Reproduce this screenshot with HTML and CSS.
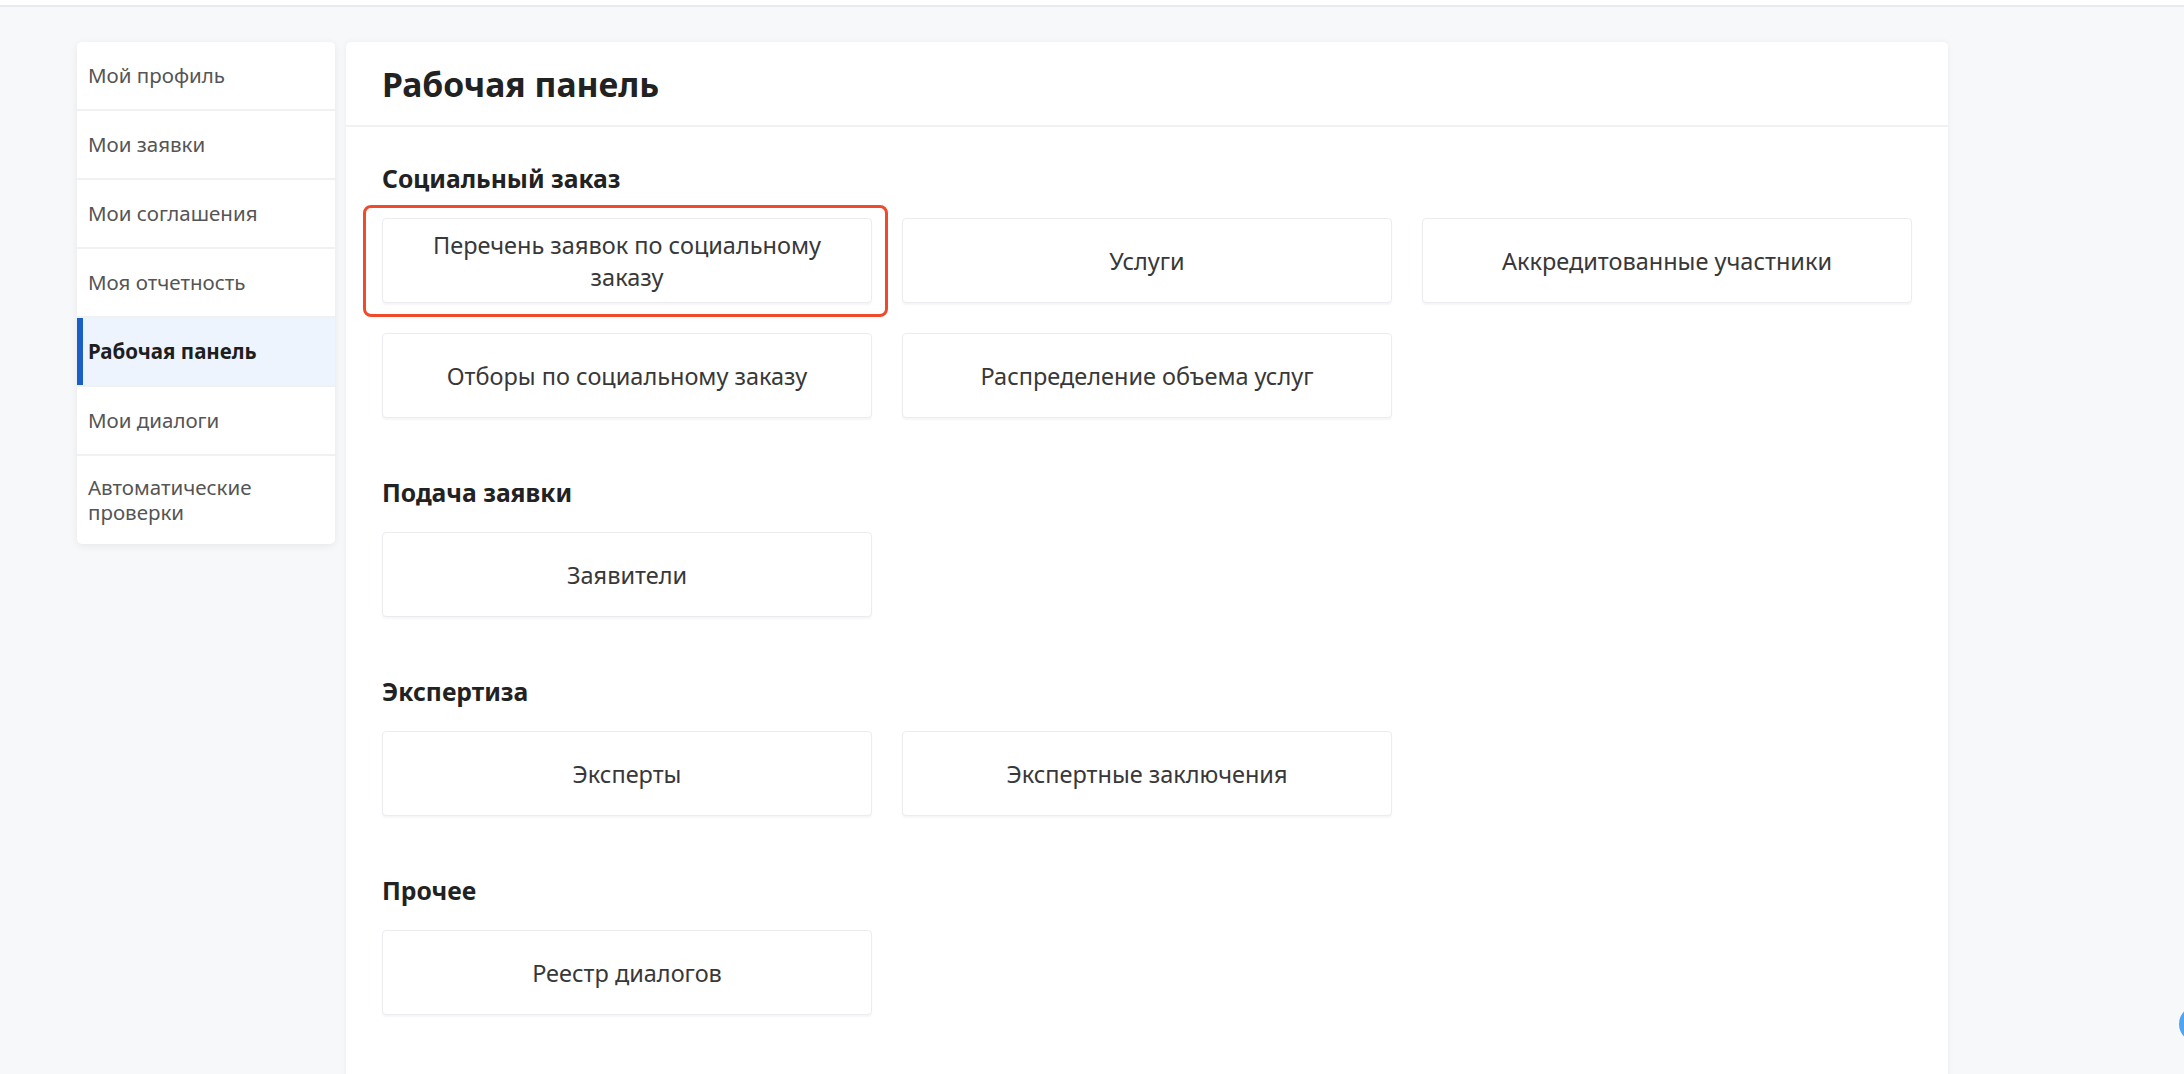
FILE: index.html
```html
<!DOCTYPE html>
<html lang="ru">
<head>
<meta charset="utf-8">
<title>Рабочая панель</title>
<link rel="stylesheet" href="styles.css">
</head>
<body>
<div class="topbar"></div>
<div class="page">
  <nav class="sidebar">
    <a class="nav-item">Мой профиль</a>
    <a class="nav-item">Мои заявки</a>
    <a class="nav-item">Мои соглашения</a>
    <a class="nav-item">Моя отчетность</a>
    <a class="nav-item active">Рабочая панель</a>
    <a class="nav-item">Мои диалоги</a>
    <a class="nav-item">Автоматические проверки</a>
  </nav>
  <main class="panel">
    <header class="panel-header"><h1>Рабочая панель</h1></header>
    <div class="panel-body">
      <section class="group">
        <h2>Социальный заказ</h2>
        <div class="cards">
          <div class="card marked"><span>Перечень заявок по социальному заказу</span><i class="mark"></i></div>
          <div class="card"><span>Услуги</span></div>
          <div class="card"><span>Аккредитованные участники</span></div>
          <div class="card"><span>Отборы по социальному заказу</span></div>
          <div class="card"><span>Распределение объема услуг</span></div>
        </div>
      </section>
      <section class="group">
        <h2>Подача заявки</h2>
        <div class="cards">
          <div class="card"><span>Заявители</span></div>
        </div>
      </section>
      <section class="group">
        <h2>Экспертиза</h2>
        <div class="cards">
          <div class="card"><span>Эксперты</span></div>
          <div class="card"><span>Экспертные заключения</span></div>
        </div>
      </section>
      <section class="group">
        <h2>Прочее</h2>
        <div class="cards">
          <div class="card"><span>Реестр диалогов</span></div>
        </div>
      </section>
    </div>
  </main>
</div>
<div class="fab"></div>
</body>
</html>
```
FILE: styles.css
```css
* { box-sizing: border-box; }
html, body { margin: 0; padding: 0; }
body {
  background: #f7f8fa;
  font-family: "Noto Sans", "Open Sans", sans-serif;
  color: #333;
  height: 1074px;
  overflow: hidden;
}
.topbar {
  height: 7px;
  background: #fff;
  border-bottom: 2px solid #e9eaed;
}
.page {
  display: flex;
  align-items: flex-start;
  gap: 11px;
  padding: 35px 0 0 77px;
}
.sidebar {
  width: 258px;
  flex: none;
  background: #fff;
  border-radius: 5px;
  box-shadow: 0 2px 8px rgba(0,0,0,0.07);
  display: flex;
  flex-direction: column;
  overflow: hidden;
}
.nav-item {
  display: flex;
  align-items: center;
  min-height: 69px;
  padding: 19px 14px 19px 11px;
  font-size: 20.5px;
  line-height: 25px;
  color: #555;
  border-top: 2px solid #f0f1f3;
}
.nav-item:first-child { border-top: none; min-height: 67px; }
.nav-item.active {
  background: #edf4fe;
  color: #1e1e1e;
  font-weight: 700;
  box-shadow: inset 6px 0 0 #1b5fc6;
}
.panel {
  width: 1602px;
  flex: none;
  background: #fff;
  border-radius: 5px;
  box-shadow: 0 0 6px rgba(0,0,0,0.05);
  min-height: 1100px;
}
.panel-header {
  height: 85px;
  border-bottom: 2px solid #f0f1f3;
  display: flex;
  align-items: center;
  padding: 0 36px;
}
.panel-header h1 {
  margin: 0;
  font-size: 33.7px;
  font-weight: 700;
  color: #222;
  line-height: 40px;
}
.panel-body {
  padding: 36px 36px;
  display: flex;
  flex-direction: column;
  gap: 59px;
}
.group h2 {
  margin: 0 0 23px;
  font-size: 24.7px;
  line-height: 32px;
  font-weight: 700;
  color: #222;
}
.cards {
  display: grid;
  grid-template-columns: repeat(3, 490px);
  gap: 30px;
}
.card {
  position: relative;
  height: 85px;
  display: flex;
  align-items: center;
  justify-content: center;
  text-align: center;
  padding: 0 30px;
  background: #fff;
  border: 1px solid #ebecef;
  border-radius: 4px;
  box-shadow: 0 2px 2px rgba(0,0,0,0.04);
  font-size: 23.5px;
  line-height: 32px;
  color: #383838;
}
.mark {
  position: absolute;
  left: -20px;
  right: -17px;
  top: -14px;
  bottom: -15px;
  border: 3px solid #ef4a2b;
  border-radius: 8px;
  pointer-events: none;
}
.fab {
  position: absolute;
  left: 2179px;
  top: 1006px;
  width: 36px;
  height: 36px;
  border-radius: 50%;
  background: #4ea6f2;
}
```
